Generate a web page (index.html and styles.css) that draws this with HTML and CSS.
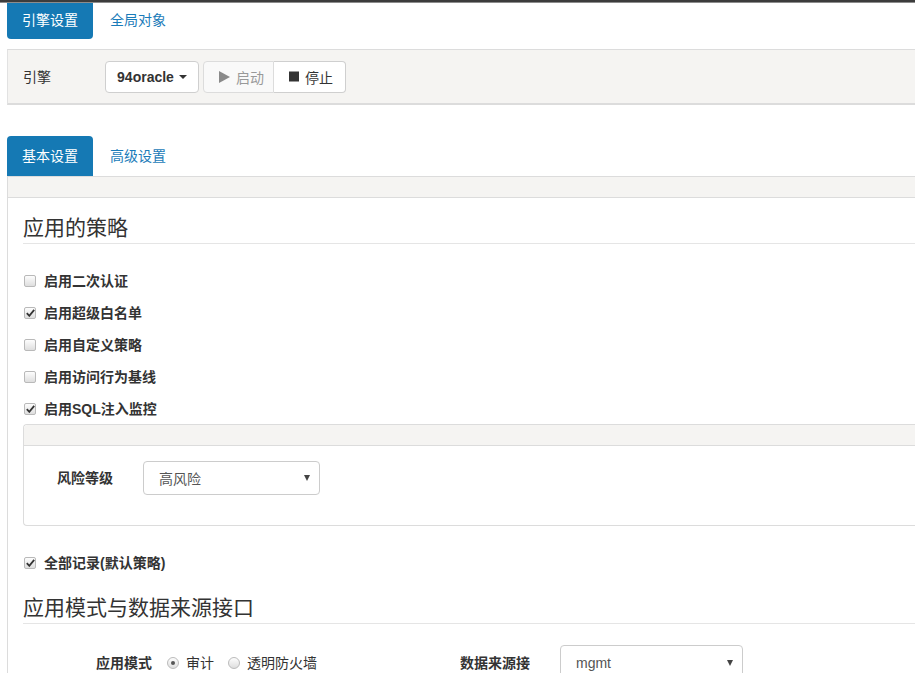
FILE: index.html
```html
<!DOCTYPE html>
<html lang="zh-CN">
<head>
<meta charset="utf-8">
<title>引擎设置</title>
<link rel="stylesheet" href="styles.css">
</head>
<body>
<div class="topbar"></div>
<div class="page">
  <ul class="tabs tabs-top">
    <li class="tab active">引擎设置</li>
    <li class="tab">全局对象</li>
  </ul>

  <div class="engine-bar">
    <span class="engine-label">引擎</span>
    <div class="btn-group">
      <button class="btn btn-bold">94oracle <span class="caret"></span></button>
    </div>
    <div class="btn-group joined">
      <button class="btn btn-disabled"><svg class="ico" width="11" height="12" viewBox="0 0 11 12"><polygon points="0,0 11,6 0,12" fill="#8a8a8a"/></svg>启动</button>
      <button class="btn"><svg class="ico" width="10" height="11" viewBox="0 0 10 11"><rect x="0" y="0.5" width="10" height="10" fill="#333"/></svg>停止</button>
    </div>
  </div>

  <ul class="tabs tabs-main">
    <li class="tab active">基本设置</li>
    <li class="tab">高级设置</li>
  </ul>

  <div class="panel">
    <div class="panel-head"></div>
    <div class="panel-body">
      <h3 class="section-title">应用的策略</h3>

      <div class="checks">
        <label class="check"><span class="box"></span>启用二次认证</label>
        <label class="check"><span class="box checked"><svg width="9" height="8" viewBox="0 0 9 8"><path d="M0.8 4.2 L3.3 6.8 L8.2 0.9" fill="none" stroke="#333" stroke-width="1.8"/></svg></span>启用超级白名单</label>
        <label class="check"><span class="box"></span>启用自定义策略</label>
        <label class="check"><span class="box"></span>启用访问行为基线</label>
        <label class="check"><span class="box checked"><svg width="9" height="8" viewBox="0 0 9 8"><path d="M0.8 4.2 L3.3 6.8 L8.2 0.9" fill="none" stroke="#333" stroke-width="1.8"/></svg></span>启用SQL注入监控</label>
      </div>

      <div class="subpanel">
        <div class="subpanel-head"></div>
        <div class="subpanel-body">
          <span class="form-label risk-label">风险等级</span>
          <div class="select select-risk"><span>高风险</span><span class="arrow"></span></div>
        </div>
      </div>

      <label class="check check-all"><span class="box checked"><svg width="9" height="8" viewBox="0 0 9 8"><path d="M0.8 4.2 L3.3 6.8 L8.2 0.9" fill="none" stroke="#333" stroke-width="1.8"/></svg></span>全部记录(默认策略)</label>

      <h3 class="section-title second">应用模式与数据来源接口</h3>

      <div class="form-row">
        <div class="col col-mode">
          <span class="form-label">应用模式</span>
          <label class="radio"><span class="dot checked"></span>审计</label>
          <label class="radio"><span class="dot"></span>透明防火墙</label>
        </div>
        <div class="col col-source">
          <span class="form-label clip">数据来源接口</span>
          <div class="select select-source"><span>mgmt</span><span class="arrow"></span></div>
        </div>
      </div>
    </div>
  </div>
</div>
</body>
</html>
```

FILE: styles.css
```css
html, body {
  margin: 0;
  padding: 0;
  overflow: hidden;
  background: #fff;
}
body {
  font-family: "Liberation Sans", "Noto Sans CJK SC", sans-serif;
  font-size: 14px;
  color: #333;
  width: 915px;
  height: 673px;
}
.topbar {
  height: 2px;
  background: #3c3c3c;
  border-bottom: 1px solid #8c8c8c;
}
.page {
  padding-left: 7px;
}
.tabs {
  list-style: none;
  margin: 0;
  padding: 0;
  display: flex;
}
.tab {
  padding: 0 15px;
  margin-right: 2px;
  color: #1a7bb9;
  font-size: 14px;
}
.tab.active {
  background: #1579b4;
  color: #fff;
}
.tabs-top .tab {
  height: 36px;
  line-height: 34px;
}
.tabs-top .tab.active {
  border-radius: 0 0 4px 4px;
}
.tabs-main {
  margin-top: 31px;
}
.tabs-main .tab {
  height: 40px;
  line-height: 40px;
}
.tabs-main .tab.active {
  border-radius: 4px 4px 0 0;
}

.engine-bar {
  margin-top: 10px;
  background: #f5f4f2;
  border-top: 1px solid #dcdcdc;
  border-left: 1px solid #e2e2e2;
  border-bottom: 2px solid #dcdcdc;
  height: 53px;
  display: flex;
  align-items: center;
  padding-left: 15px;
  box-sizing: content-box;
}
.engine-label {
  width: 82px;
  line-height: 20px;
}
.btn-group {
  display: flex;
  margin-right: 4px;
}
.btn {
  box-sizing: border-box;
  font-family: inherit;
  font-size: 14px;
  color: #333;
  background: #fff;
  border: 1px solid #cfcfcf;
  border-radius: 4px;
  height: 32px;
  padding: 0 12px;
  display: flex;
  align-items: center;
  margin: 0;
  white-space: nowrap;
}
.btn-bold {
  font-weight: bold;
  width: 94px;
  justify-content: center;
  padding: 0;
}
.caret {
  display: inline-block;
  width: 0;
  height: 0;
  border-left: 4px solid transparent;
  border-right: 4px solid transparent;
  border-top: 4px solid #333;
  margin-left: 5px;
}
.joined .btn {
  border-radius: 0;
}
.joined .btn:first-child {
  border-radius: 4px 0 0 4px;
  width: 71px;
  padding: 0 0 0 15px;
}
.joined .btn:last-child {
  border-radius: 0 4px 4px 0;
  border-left: none;
  width: 72px;
  padding: 0 0 0 15px;
}
.btn-disabled {
  color: #999;
  background: #f9f9f9;
  border-color: #dcdcdc;
}
.ico {
  margin-right: 6px;
  flex: none;
}

.panel {
  border-top: 1px solid #dcdcdc;
  border-left: 1px solid #dcdcdc;
}
.panel-head {
  height: 20px;
  background: #f5f4f2;
  border-bottom: 1px solid #dcdcdc;
}
.panel-body {
  padding-left: 15px;
}
.section-title {
  margin: 18px 0 0 0;
  font-size: 21px;
  line-height: 23px;
  font-weight: normal;
  padding-bottom: 4px;
  border-bottom: 1px solid #e5e5e5;
  color: #333;
}
.section-title.second {
  margin-top: 23px;
}
.checks {
  margin-top: 27px;
  display: flex;
  flex-direction: column;
  gap: 12px;
}
.check {
  display: flex;
  align-items: center;
  font-weight: bold;
  line-height: 20px;
  height: 20px;
  font-size: 14px;
}
.box {
  width: 10px;
  height: 10px;
  border: 1px solid #b9b9b9;
  border-radius: 2px;
  background: linear-gradient(#fdfdfd, #dedede);
  margin-left: 1px;
  margin-right: 8px;
  display: flex;
  align-items: center;
  justify-content: center;
}
.box svg {
  display: block;
}
.check-all {
  margin-top: 27px;
}

.subpanel {
  margin-top: 5px;
  border: 1px solid #dcdcdc;
  border-right: none;
  border-radius: 4px 0 0 4px;
  height: 100px;
}
.subpanel-head {
  height: 20px;
  background: #f5f4f2;
  border-bottom: 1px solid #dcdcdc;
  border-radius: 4px 0 0 0;
}
.subpanel-body {
  display: flex;
  align-items: center;
  padding: 15px 0 0 33px;
}
.form-label {
  font-weight: bold;
  font-size: 14px;
  line-height: 20px;
  white-space: nowrap;
}
.risk-label {
  width: 86px;
}
.select {
  box-sizing: border-box;
  border: 1px solid #cccccc;
  border-radius: 4px;
  height: 34px;
  display: flex;
  align-items: center;
  justify-content: space-between;
  padding: 0 9px 0 15px;
  color: #555;
  font-size: 14px;
  background: #fff;
}
.select-risk {
  width: 177px;
}
.arrow {
  width: 0;
  height: 0;
  border-left: 3px solid transparent;
  border-right: 3px solid transparent;
  border-top: 6px solid #444;
}

.form-row {
  display: grid;
  grid-template-columns: 437px auto;
  margin-top: 21px;
}
.col {
  display: flex;
  align-items: center;
  height: 35px;
}
.col-mode {
  padding-left: 73px;
}
.col-mode .form-label {
  margin-right: 15px;
}
.radio {
  display: flex;
  align-items: center;
  line-height: 20px;
  color: #333;
  margin-right: 14px;
}
.dot {
  width: 10px;
  height: 10px;
  border: 1px solid #bbbbbb;
  border-radius: 50%;
  background: linear-gradient(#fdfdfd, #dedede);
  margin-right: 7px;
  display: flex;
  align-items: center;
  justify-content: center;
}
.dot.checked::after {
  content: "";
  width: 4px;
  height: 4px;
  border-radius: 50%;
  background: #555;
}
.clip {
  width: 70px;
  overflow: hidden;
  margin-right: 30px;
}
.select-source {
  width: 183px;
  height: 35px;
}
```
